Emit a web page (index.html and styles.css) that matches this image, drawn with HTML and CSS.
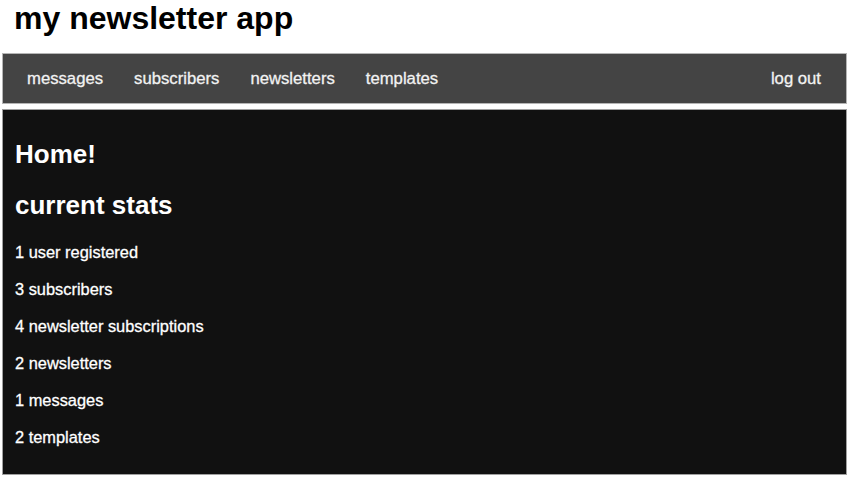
FILE: index.html
```html
<!DOCTYPE html>
<html>
<head>
<meta charset="utf-8">
<title>my newsletter app</title>
<link rel="stylesheet" href="styles.css">
</head>
<body>
<h1 class="title">my newsletter app</h1>
<nav class="nav">
  <ul class="nav-links">
    <li><a href="#">messages</a></li>
    <li><a href="#">subscribers</a></li>
    <li><a href="#">newsletters</a></li>
    <li><a href="#">templates</a></li>
  </ul>
  <a class="logout" href="#">log out</a>
</nav>
<main class="content">
  <h2 class="heading">Home!</h2>
  <h2 class="heading stats-heading">current stats</h2>
  <p class="stat">1 user registered</p>
  <p class="stat">3 subscribers</p>
  <p class="stat">4 newsletter subscriptions</p>
  <p class="stat">2 newsletters</p>
  <p class="stat">1 messages</p>
  <p class="stat">2 templates</p>
</main>
</body>
</html>
```
FILE: styles.css
```css
html, body {
  background: #fff;
}
body {
  margin: 0 3px 0 2px;
  font-family: "Liberation Sans", Arial, Helvetica, sans-serif;
}
.title {
  margin: 0 0 17px;
  padding-left: 12px;
  font-size: 32px;
  line-height: 36px;
  font-weight: bold;
  color: #000;
}
.nav {
  display: flex;
  justify-content: space-between;
  align-items: center;
  height: 49px;
  background: #444;
  border: 1px solid #b5b5b5;
  padding: 0 25px 0 24px;
}
.nav-links {
  display: flex;
  gap: 31px;
  list-style: none;
  margin: 0;
  padding: 0;
}
.nav a {
  color: #f2f2f2;
  text-decoration: none;
  font-size: 16.7px;
  line-height: 49px;
  -webkit-text-stroke: 0.3px #f2f2f2;
}
.content {
  margin-top: 5px;
  background: #111;
  border: 1px solid #a0a0a0;
  padding: 29px 12px 18px;
  color: #fff;
}
.heading {
  margin: 0;
  font-size: 26px;
  line-height: 30px;
  font-weight: bold;
}
.stats-heading {
  margin-top: 21px;
  margin-bottom: 14px;
}
.stat {
  margin: 0;
  font-size: 16.4px;
  line-height: 37px;
  -webkit-text-stroke: 0.3px #fff;
}
```
